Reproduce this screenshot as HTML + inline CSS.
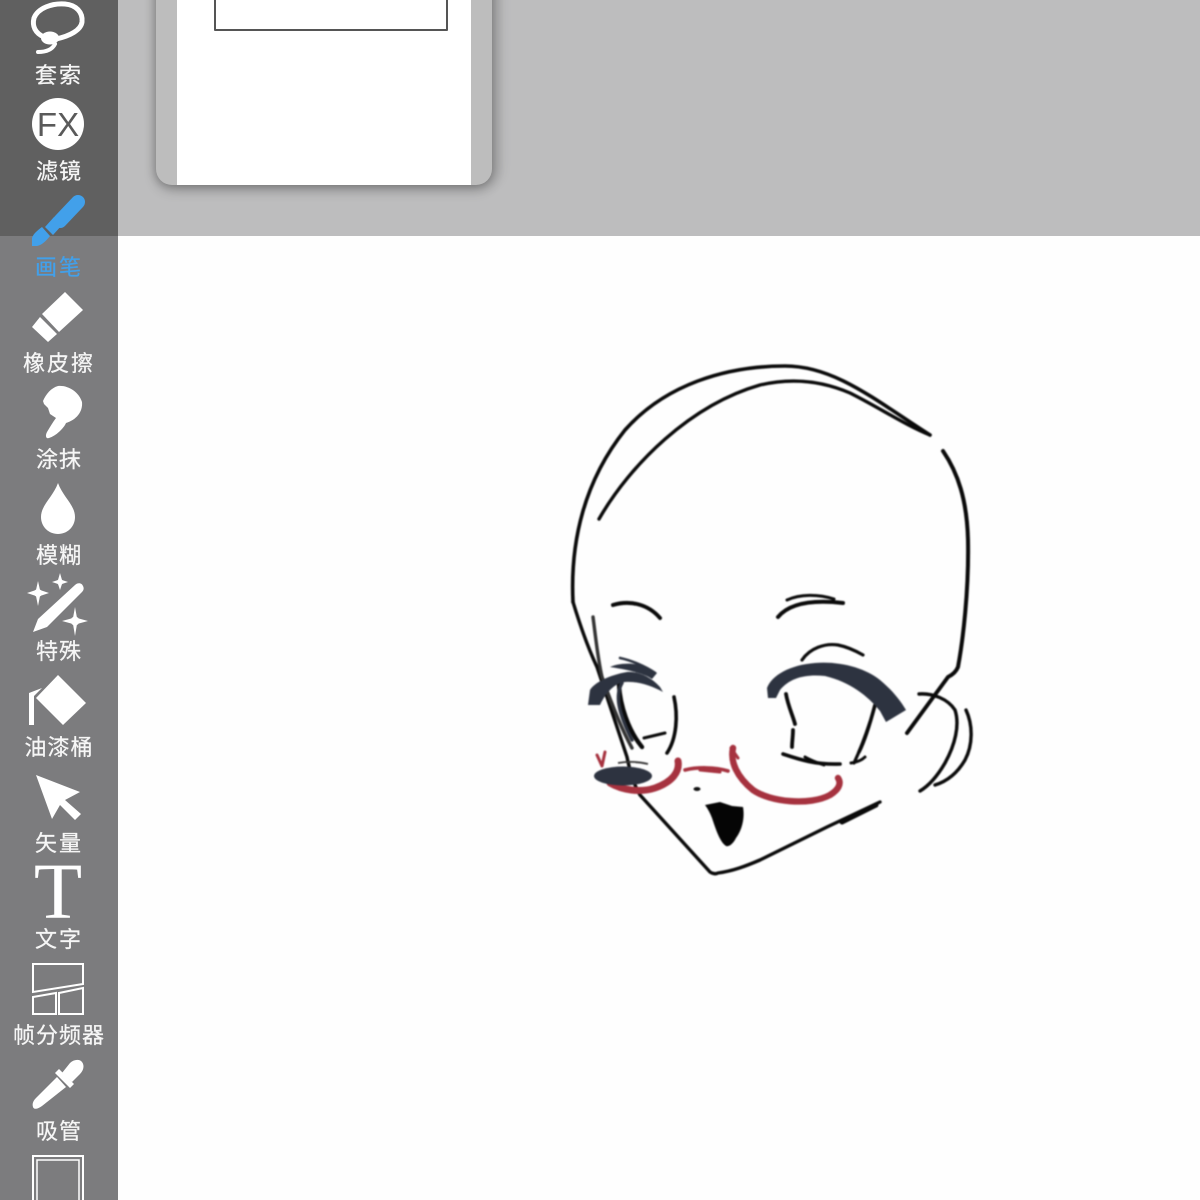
<!DOCTYPE html>
<html lang="zh">
<head>
<meta charset="utf-8">
<style>
html,body{margin:0;padding:0;background:#fefefe;}
#p{position:relative;width:1200px;height:1200px;overflow:hidden;background:#fefefe;font-family:"Liberation Sans","WenQuanYi Zen Hei","Noto Sans CJK SC",sans-serif;}
.top{position:absolute;left:118px;top:0;width:1082px;height:236px;background:#bdbdbe;}
.panel{position:absolute;left:156px;top:-40px;width:336px;height:225px;background:#bdbdbd;border-radius:0 0 16px 16px;box-shadow:0 5px 12px rgba(0,0,0,.24),7px 0 12px rgba(0,0,0,.16),-3px 0 8px rgba(0,0,0,.12);overflow:hidden;}
.sheet{position:absolute;left:21px;top:0;width:294px;height:225px;background:#fff;}
.box{position:absolute;left:37px;top:0;width:230px;height:67px;border:2px solid #555;border-radius:1px;}
.side{position:absolute;left:0;top:0;width:118px;height:1200px;background:#7c7c7e;}
.side .dark{position:absolute;left:0;top:0;width:118px;height:236px;background:#606060;}
.l{position:absolute;left:0;width:118px;text-align:center;color:#f6f6f6;font-size:22px;line-height:26px;height:26px;white-space:nowrap;-webkit-text-stroke:.25px #f6f6f6;filter:blur(.35px);}
svg{position:absolute;left:0;top:0;}
</style>
</head>
<body>
<div id="p">
  <div class="top"></div>
  <div class="panel"><div class="sheet"><div class="box"></div></div></div>
  <div class="side"><div class="dark"></div>
    <div class="l" style="top:63px;letter-spacing:2px">套索</div>
    <div class="l" style="top:159px;letter-spacing:1px">滤镜</div>
    <div class="l" style="top:255px;letter-spacing:2px;color:#42a0ea;-webkit-text-stroke-color:#42a0ea">画笔</div>
    <div class="l" style="top:351px;letter-spacing:2px">橡皮擦</div>
    <div class="l" style="top:447px;letter-spacing:1px">涂抹</div>
    <div class="l" style="top:543px;letter-spacing:1px">模糊</div>
    <div class="l" style="top:639px;letter-spacing:1px">特殊</div>
    <div class="l" style="top:735px;letter-spacing:1px">油漆桶</div>
    <div class="l" style="top:831px;letter-spacing:2px">矢量</div>
    <div class="l" style="top:927px;letter-spacing:2px">文字</div>
    <div class="l" style="top:1023px;letter-spacing:1px">帧分频器</div>
    <div class="l" style="top:1119px;letter-spacing:1px">吸管</div>
  </div>

  <svg width="118" height="1200" viewBox="0 0 118 1200">
    <!-- lasso -->
    <path d="M44 37C35 33 32 26 34 18C38 8 52 3 65 4C76 5 83 12 82 22C81 30 70 36 56 39" fill="none" stroke="#fff" stroke-width="5" stroke-linecap="round"/>
    <ellipse cx="50" cy="38" rx="9" ry="6.5" fill="#fff"/>
    <path d="M38 52C46 52 52 50 55 44" fill="none" stroke="#fff" stroke-width="4" stroke-linecap="round"/>
    <!-- FX -->
    <circle cx="58" cy="124" r="26" fill="#fff"/>
    <text x="58" y="136" text-anchor="middle" font-family="Liberation Sans" font-size="33" fill="#5a5a5a">FX</text>
    <!-- brush -->
    <path d="M78 202L60 221" stroke="#42a0ea" stroke-width="14" stroke-linecap="round" fill="none"/>
    <path d="M54 217L62 225L53 235L45 227Z" fill="#42a0ea"/>
    <path d="M42 227L50 236C46 241 42 245 37 246H32V238C33 234 38 230 42 227Z" fill="#42a0ea"/>
    <!-- eraser -->
    <path d="M65 292L83 310L59 332L42 314Z" fill="#fff"/>
    <path d="M40 317L57 334L48 342L32 327Z" fill="#fff"/>
    <!-- smudge -->
    <path d="M58 386C68 385 79 392 82 402C83 412 76 420 66 423C64 428 56 436 49 438C46 439 45 436 47 432C50 427 53 422 56 418L50 414L48 408L44 404L43 401C46 394 51 388 58 386Z" fill="#fff"/>
    <!-- drop -->
    <path d="M58 483C63 497 75 505 75 517C75 527 67 534 58 534C49 534 41 527 41 517C41 505 53 497 58 483Z" fill="#fff"/>
    <!-- special -->
    <path d="M75 585C78 582 82 583 83 586C84 588 84 590 82 592L47 627L33 632L38 619Z" fill="#fff"/>
    <path d="M38 581L40 590L49 593L40 596L38 606L36 596L27 593L36 590Z" fill="#fff"/>
    <path d="M60 573L62 580L68 582L62 584L60 590L58 584L52 582L58 580Z" fill="#fff"/>
    <path d="M75 607L77 618L88 621L77 624L75 636L73 624L62 621L73 618Z" fill="#fff"/>
    <circle cx="38" cy="593" r="4" fill="#fff"/><circle cx="60" cy="582" r="3" fill="#fff"/><circle cx="75" cy="621" r="4.5" fill="#fff"/>
    <!-- bucket -->
    <path d="M58 675L86 703L63 725L36 698Z" fill="#fff"/>
    <path d="M29 725V693L42 688L34 696V725Z" fill="#fff"/>
    <!-- arrow -->
    <path d="M36 775L80 792L65 800L81 814L75 820L60 805L52 819Z" fill="#fff"/>
    <!-- T -->
    <text x="58" y="918" text-anchor="middle" font-family="Liberation Serif" font-size="79" fill="#fff">T</text>
    <!-- frame -->
    <g fill="none" stroke="#fff" stroke-width="2">
      <path d="M33 964H83V984L33 992Z"/>
      <path d="M33 997L56 993V1014H33Z"/>
      <path d="M59 993L83 988V1014H59Z"/>
    </g>
    <!-- dropper -->
    <path d="M70 1063C74 1059 80 1059 82 1062C85 1066 83 1071 80 1074L72 1082L62 1073Z" fill="#fff"/>
    <path d="M59 1069L74 1084L70 1088L55 1073Z" fill="#fff"/>
    <path d="M57 1077L66 1087L42 1106C38 1109 34 1110 33 1107C32 1104 33 1101 36 1098Z" fill="#fff"/>
    <!-- last frame -->
    <path d="M33 1201V1156H83V1201" fill="none" stroke="#fff" stroke-width="2"/>
    <path d="M37 1201V1160H79V1201" fill="none" stroke="#fff" stroke-width="1.5"/>
  </svg>

  <svg width="1200" height="1200" viewBox="0 0 1200 1200" style="filter:blur(.7px)">
    <g fill="none" stroke="#0a0a0a" stroke-linecap="round" stroke-linejoin="round">
      <!-- head -->
      <path stroke-width="3.6" d="M573 602C570 540 585 480 625 430C665 385 725 366 785 366C835 366 875 400 930 435"/>
      <path stroke-width="3.4" d="M599 519C630 465 690 405 760 385C790 378 820 380 850 393C880 408 905 425 930 435"/>
      <path stroke-width="4" d="M943 451C958 473 967 500 968 540C969 590 963 640 958 667C956 672 952 675 948 677L907 733"/>
      <path stroke-width="3.4" d="M573 602C580 625 588 648 597 667L627 757C630 772 634 785 640 795L710 872C713 874 716 874 718 873C733 871 746 866 760 860L827 827L880 802"/>
      <path stroke-width="5" d="M842 822L876 805"/>
      <path stroke-width="3.4" stroke="#333" d="M593 617C596 640 598 660 602 677C612 705 622 730 632 748"/>
      <!-- brows -->
      <path stroke-width="4" d="M613 605C630 600 648 604 660 618"/>
      <path stroke-width="4" d="M778 617C788 605 808 599 843 603"/>
      <path stroke-width="3" d="M787 600C800 594 818 594 834 599"/>
      <path stroke-width="3.2" d="M802 660C810 648 825 643 838 645C848 647 856 651 863 655"/>
      <!-- right eye -->
      <path stroke-width="3.8" d="M786 694C788 706 793 716 795 724"/>
      <path stroke-width="3.8" d="M793 730C793 736 792 742 792 747"/>
      <path stroke-width="3.6" d="M875 705C871 720 866 738 859 752"/>
      <path stroke-width="3.2" d="M870 722C866 734 862 746 854 763"/>
      <path stroke-width="3" d="M865 757C862 760 858 762 851 763"/>
      <path stroke-width="3.6" d="M783 754C798 759 815 765 840 764"/>
      <path stroke-width="3" d="M805 757C812 761 818 763 824 765"/>
      <!-- left eye -->
      <path stroke-width="4.4" d="M619 685C620 705 628 730 642 747"/>
      <path stroke-width="3.4" stroke="#2d3340" d="M622 683C615 695 618 712 632 740"/>
      <path stroke-width="3.6" d="M674 697C678 715 677 738 667 753"/>
      <path stroke-width="3" d="M644 738L665 733"/>
      <!-- ear -->
      <path stroke-width="3.4" d="M919 694C933 693 948 699 955 710C960 725 955 745 945 763C938 775 930 785 920 791"/>
      <path stroke-width="3.4" d="M966 710C973 725 973 745 965 760C958 772 948 781 935 785"/>
    </g>
    <!-- thick lashes -->
    <path fill="#2d3340" d="M767 688C772 675 790 665 815 663C840 661 865 668 880 680C892 690 900 700 906 710L886 722L880 711C868 696 850 682 825 676C805 674 790 678 780 690L776 698L768 698Z"/>
    <path fill="#2d3340" d="M588 705L590 690C595 682 610 675 627 672C637 671 650 676 660 687L663 692C652 686 638 681 625 682C615 683 606 692 600 705Z"/>
    <path fill="#2d3340" d="M610 667C618 663 640 660 657 673L652 679C645 674 630 670 610 667Z"/>
    <path fill="none" stroke="#2d3340" stroke-width="2.6" stroke-linecap="round" d="M620 658C630 660 645 666 655 673"/>
    <!-- glasses -->
    <g fill="none" stroke="#a6323f" stroke-linecap="round" stroke-linejoin="round">
      <path stroke-width="7" d="M678 761C680 772 672 782 655 788C640 793 622 790 610 783"/>
      <path stroke-width="3.6" d="M685 770C697 767 715 767 728 771"/>
      <path stroke-width="3" d="M700 770L720 772"/>
      <path stroke-width="6.4" d="M733 748C730 762 737 777 753 790C770 802 810 806 830 795C838 790 842 784 838 778"/>
      <path stroke-width="3" d="M731 748L738 758"/>
      <path stroke-width="3" d="M597 755L602 766L605 752"/>
    </g>
    <ellipse cx="623" cy="776" rx="29" ry="9.5" fill="#2d3340"/>
    <path d="M618 763C630 761 640 762 648 764" fill="none" stroke="#333" stroke-width="1.8"/>
    <ellipse cx="697" cy="789" rx="3.5" ry="2" fill="#111"/>
    <path d="M705 805L720 802L732 806L743 807C745 818 742 830 736 838C733 844 729 847 726 846C720 842 716 830 712 818C710 813 708 809 705 805Z" fill="#050505"/>
  </svg>
</div>
</body>
</html>
